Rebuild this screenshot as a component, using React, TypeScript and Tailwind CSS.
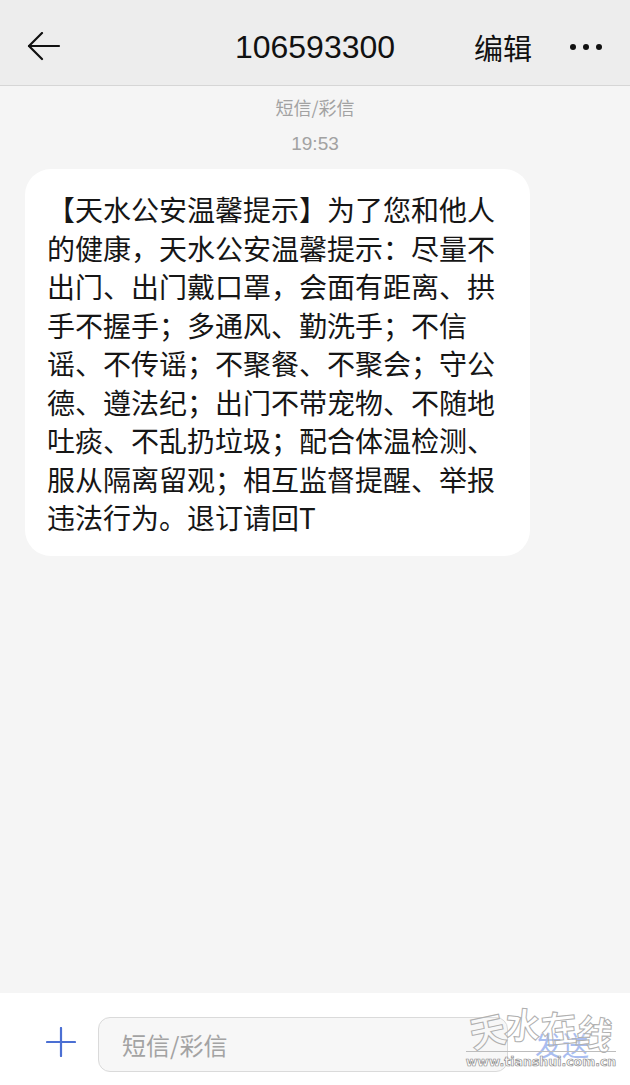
const cjk = "font-['Noto_Sans_CJK_SC','Noto_Sans',sans-serif]"

const lines = [
  '【天水公安温馨提示】为了您和他人',
  '的健康，天水公安温馨提示：尽量不',
  '出门、出门戴口罩，会面有距离、拱',
  '手不握手；多通风、勤洗手；不信',
  '谣、不传谣；不聚餐、不聚会；守公',
  '德、遵法纪；出门不带宠物、不随地',
  '吐痰、不乱扔垃圾；配合体温检测、',
  '服从隔离留观；相互监督提醒、举报',
  '违法行为。退订请回T',
]

function Header() {
  return (
    <header className="relative flex h-[86px] shrink-0 items-center border-b border-[#d6d6d6] bg-[#ededed] pt-[9px]">
      <button className="ml-[27px] flex h-[30px] w-[34px] items-center">
        <svg width="34" height="30" viewBox="0 0 34 30" fill="none" stroke="#111" strokeWidth="2.2" strokeLinecap="round" strokeLinejoin="round">
          <path d="M2 14h30" />
          <path d="M15 1 2 14l13 13" />
        </svg>
      </button>
      <h1 className="absolute left-1/2 top-[27px] -translate-x-1/2 font-['Liberation_Sans',sans-serif] text-[32px] leading-[40px] text-[#111]">
        106593300
      </h1>
      <div className="ml-auto mr-[28px] flex items-center gap-[38px]">
        <span className={`${cjk} text-[29px] leading-none text-[#111]`}>编辑</span>
        <div className="flex items-center gap-[7px]">
          <span className="h-[6px] w-[6px] rounded-full bg-[#111]" />
          <span className="h-[6px] w-[6px] rounded-full bg-[#111]" />
          <span className="h-[6px] w-[6px] rounded-full bg-[#111]" />
        </div>
      </div>
    </header>
  )
}

function Bubble() {
  return (
    <div className="ml-[25px] w-[505px] rounded-[26px] bg-white pb-[19px] pl-[22px] pr-[30px] pt-[21px]">
      <p className={`${cjk} text-[28px] leading-[38.5px] text-[#161616]`}>
        {lines.map((l, i) => (
          <span key={i} className="block whitespace-nowrap">
            {l}
          </span>
        ))}
      </p>
    </div>
  )
}

function Composer() {
  return (
    <footer className="relative flex h-[92px] shrink-0 items-start bg-white pt-[24px]">
      <button className="ml-[46px] mt-[10px] flex h-[30px] w-[30px] items-center justify-center">
        <svg width="30" height="30" viewBox="0 0 30 30" stroke="#4b6fd3" strokeWidth="2.2" strokeLinecap="round">
          <path d="M15 1v28M1 15h28" />
        </svg>
      </button>
      <div className="ml-[22px] flex h-[55px] w-[410px] items-center rounded-[12px] border border-[#dadada] bg-[#f7f7f7] pl-[23px]">
        <span className={`${cjk} text-[24px] text-[#a3a3a3]`}>短信/彩信</span>
      </div>
      <span className={`${cjk} ml-[27px] mt-[8px] text-[27px] leading-[40px] text-[#a9bdf0]`}>发送</span>

      {/* site watermark */}
      <div className="pointer-events-none absolute right-[4px] top-[14px] flex w-[170px] flex-col items-center">
        <div className={`${cjk} flex text-[36px] font-bold leading-[44px] text-white/20 [-webkit-text-stroke:1px_#b0b0b0]`}>
          <span className="-rotate-12">天</span>
          <span className="-translate-y-[6px] rotate-6">水</span>
          <span className="-translate-y-[3px] -rotate-6">在</span>
          <span className="translate-y-[2px] rotate-12">线</span>
        </div>
        <div className="h-px w-[150px] bg-[#bdbdbd]" />
        <span className="mt-[3px] font-['DejaVu_Sans',sans-serif] text-[12.5px] font-bold leading-[14px] text-white [-webkit-text-stroke:0.7px_#8e8e8e]">
          www.tianshui.com.cn
        </span>
      </div>
    </footer>
  )
}

export default function App() {
  return (
    <div className="flex h-[1085px] w-[630px] flex-col overflow-hidden bg-[#f5f5f5]">
      <Header />
      <main className="flex-1">
        <div className={`${cjk} mt-[9px] text-center text-[18px] leading-[24px] text-[#a2a2a2]`}>短信/彩信</div>
        <div className="mt-[13px] text-center font-['Liberation_Sans',sans-serif] text-[19px] leading-[24px] text-[#a2a2a2]">
          19:53
        </div>
        <div className="mt-[13px]">
          <Bubble />
        </div>
      </main>
      <Composer />
    </div>
  )
}
